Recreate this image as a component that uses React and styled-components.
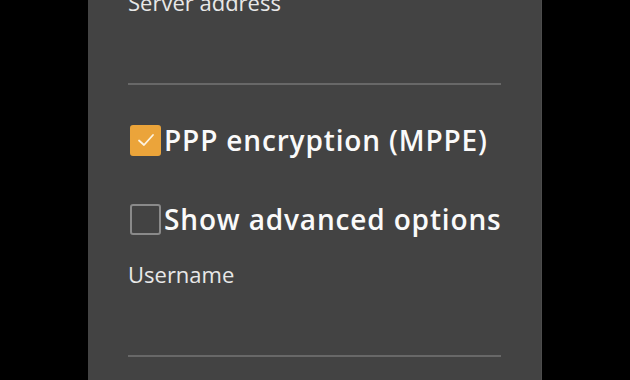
import React from "react";
import styled, { createGlobalStyle } from "styled-components";

const GlobalStyle = createGlobalStyle`
    html, body {
        margin: 0;
        padding: 0;
        background-color: #000;
        overflow: hidden;
    }
`;

const Screen = styled.div`
    width: 630px;
    height: 380px;
    overflow: hidden;
    background-color: #000;
`;

const Panel = styled.div`
    width: 454px;
    height: 420px;
    margin: -13px auto 0;
    padding: 0 40px;
    box-sizing: border-box;
    background-color: #434343;
    border-right: 1px solid #4c4c4c;
    display: flex;
    flex-direction: column;
    font-family: "Open Sans", "Noto Sans", sans-serif;
    color: #f2f2f2;
`;

const Field = styled.div`
    display: flex;
    flex-direction: column;
    margin-top: ${p => p.$top || 0}px;
`;

const Label = styled.span`
    font-size: 22px;
    line-height: 30px;
    color: #e8e8e8;
`;

const Input = styled.div`
    height: ${p => p.$height}px;
    border-bottom: 2px solid #686868;
`;

const CheckRow = styled.label`
    display: flex;
    align-items: center;
    gap: 3px;
    height: 40px;
    margin-top: ${p => p.$top}px;
    margin-left: 2px;
    margin-right: -20px;
    font-size: 28px;
    font-weight: 600;
    color: #fafafa;
    letter-spacing: 0.85px;
    white-space: nowrap;
`;

const Box = styled.span`
    width: 31px;
    height: 31px;
    box-sizing: border-box;
    border-radius: 3px;
    flex-shrink: 0;
    display: flex;
    align-items: center;
    justify-content: center;
    background-color: ${p => (p.$checked ? "#eba43a" : "transparent")};
    border: 2px solid ${p => (p.$checked ? "#eba43a" : "#8a8a8a")};
`;

const Check = () => (
    <svg width="20" height="16" viewBox="0 0 20 16">
        <path d="M3 8.5 L8 13 L17 3" fill="none" stroke="#fdf3e0" strokeWidth="1.8" strokeLinecap="round" strokeLinejoin="round" />
    </svg>
);

const App = () => {
    return (
        <Screen>
            <GlobalStyle />
            <Panel>
                <Field>
                    <Label>Server address</Label>
                    <Input $height={66} />
                </Field>
                <CheckRow $top={35}>
                    <Box $checked><Check /></Box>
                    PPP encryption (MPPE)
                </CheckRow>
                <CheckRow $top={39}>
                    <Box />
                    Show advanced options
                </CheckRow>
                <Field $top={20}>
                    <Label>Username</Label>
                    <Input $height={66} />
                </Field>
                <Field $top={17}>
                    <Label>Password</Label>
                </Field>
            </Panel>
        </Screen>
    );
};

export default App;
